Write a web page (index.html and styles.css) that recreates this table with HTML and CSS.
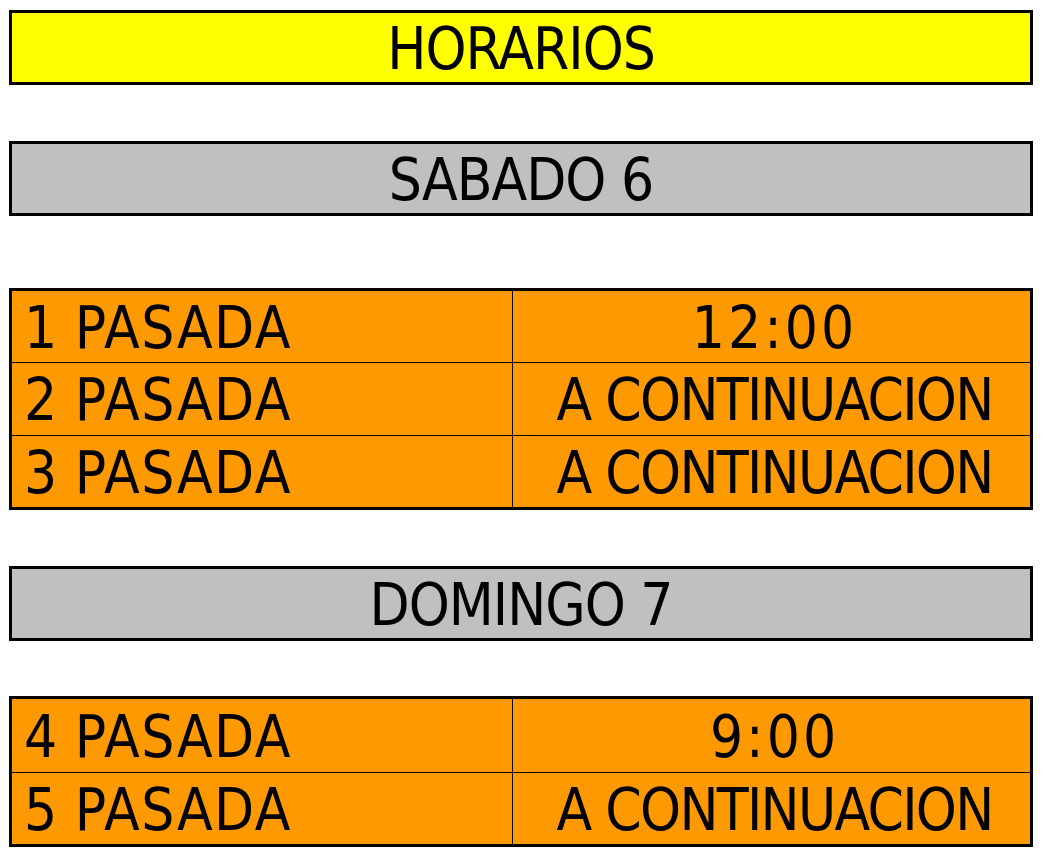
FILE: index.html
```html
<!DOCTYPE html>
<html>
<head>
<meta charset="utf-8">
<link rel="stylesheet" href="styles.css">
</head>
<body>
<div class="page">
  <div class="banner banner-yellow">HORARIOS</div>
  <div class="banner banner-gray day1">SABADO 6</div>
  <div class="table t1">
    <div class="cell left">1 PASADA</div><div class="cell right time">12:00</div>
    <div class="cell left">2 PASADA</div><div class="cell right">A CONTINUACION</div>
    <div class="cell left last">3 PASADA</div><div class="cell right last">A CONTINUACION</div>
  </div>
  <div class="banner banner-gray day2">DOMINGO 7</div>
  <div class="table t2">
    <div class="cell left">4 PASADA</div><div class="cell right time">9:00</div>
    <div class="cell left last">5 PASADA</div><div class="cell right last">A CONTINUACION</div>
  </div>
</div>
</body>
</html>
```
FILE: styles.css
```css
html, body {
  margin: 0;
  padding: 0;
  background: #ffffff;
}
.page {
  padding: 10px 0 0 9px;
  display: flex;
  flex-direction: column;
  font-family: "DejaVu Sans Condensed", "DejaVu Sans", sans-serif;
  font-stretch: condensed;
  color: #000;
  font-size: 58px;
  letter-spacing: -1px;
}
.banner {
  box-sizing: border-box;
  width: 1024px;
  height: 75px;
  border: 3px solid #000;
  display: flex;
  align-items: center;
  justify-content: center;
  line-height: 1;
  padding-top: 2px;
}
.banner-yellow { background: #ffff00; }
.banner-gray { background: #c0c0c0; }
.day1 { margin-top: 56px; }
.day2 { margin-top: 56px; }
.table {
  box-sizing: border-box;
  width: 1024px;
  border: 3px solid #000;
  background: #ff9900;
  display: grid;
  grid-template-columns: 501px 1fr;
}
.t1 { margin-top: 72px; grid-template-rows: 72px 73px 71px; }
.t2 { margin-top: 55px; grid-template-rows: 74px 71px; }
.cell {
  display: flex;
  align-items: center;
  line-height: 1;
  padding-top: 2px;
  border-bottom: 1px solid #000;
}
.cell.last { border-bottom: none; }
.left {
  border-right: 1px solid #000;
  padding-left: 12px;
  letter-spacing: 1.5px;
  word-spacing: -2px;
}
.right {
  justify-content: center;
  letter-spacing: -1.7px;
  padding-left: 6px;
}
.right.time {
  letter-spacing: 3px;
  padding-left: 6px;
}
```
